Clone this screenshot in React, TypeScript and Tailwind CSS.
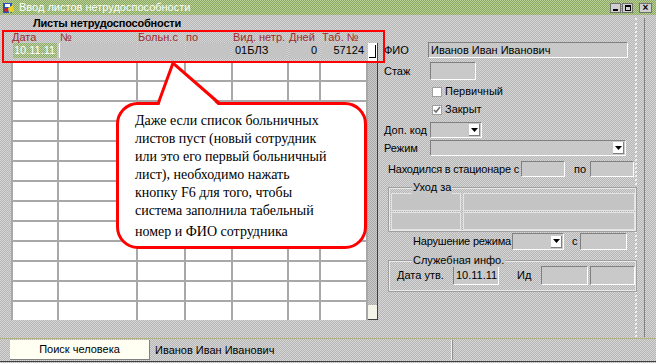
import React from "react";

const cols = "grid grid-cols-[44px_77px_46px_45px_54px_30px_45px] gap-x-[2px]";

const Field = ({ w, children, right }: { w: string; children?: React.ReactNode; right?: boolean }) => (
  <div
    className={`${w} shrink-0 h-full flex items-center px-[2px] whitespace-nowrap border border-t-[#808080] border-l-[#808080] border-b-white border-r-white bg-[#c9c9c9] ${right ? "justify-end" : ""}`}
  >
    {children}
  </div>
);

const Select = ({ w }: { w: string }) => (
  <div className={`${w} shrink-0 h-full flex justify-end items-center pr-[1px] border border-t-[#808080] border-l-[#808080] border-b-white border-r-white bg-[#c9c9c9]`}>
    <div className="w-[11px] h-[12px] bg-white flex items-center justify-center border-r border-b border-[#808080]">
      <svg width="7" height="4" viewBox="0 0 7 4">
        <path d="M0 0h7L3.5 4z" fill="#000" />
      </svg>
    </div>
  </div>
);

const Check = ({ on, label }: { on?: boolean; label: string }) => (
  <div className="h-[11px] pl-[52px] flex items-center gap-[3px]">
    <div className="w-[10px] h-[10px] bg-white border border-[#a0a0a0] flex items-center justify-center">
      {on && (
        <svg width="8" height="8" viewBox="0 0 8 8">
          <path d="M1 4l2 2 4-5" stroke="#707070" strokeWidth="1.6" fill="none" />
        </svg>
      )}
    </div>
    <span>{label}</span>
  </div>
);

const Group = ({ label, className, children }: { label: string; className: string; children: React.ReactNode }) => (
  <div className={`relative ml-[9px] w-[247px] border border-[#e8e8e8] outline outline-1 outline-[#a0a0a0] ${className}`}>
    <span className="absolute -top-[8px] left-[22px] px-[1px] bg-[#c6c6c6] leading-[13px] whitespace-nowrap">{label}</span>
    {children}
  </div>
);

export default function App() {
  const dither = "bg-[image:repeating-conic-gradient(#b6b6b6_0_25%,#d6d6d6_0_50%)] bg-[length:2px_2px]";
  return (
    <div
      className={`relative w-[656px] h-[363px] overflow-hidden flex flex-col text-[11px] leading-[13px] text-black font-['Liberation_Sans',Arial,sans-serif] ${dither}`}
    >
      {/* title bar */}
      <div className="h-[15px] flex items-center pl-[2px] pr-[4px] bg-[image:repeating-conic-gradient(#88a860_0_25%,#bcd09a_0_50%)] bg-[length:2px_2px]">
        <svg width="13" height="12" viewBox="0 0 13 12">
          <rect x="1" y="1" width="9" height="10" fill="#2850c8" />
          <rect x="3" y="2" width="5" height="3" fill="#ffffff" />
          <path d="M6 6l5-3 1 6-5 2z" fill="#f0d020" />
          <circle cx="4" cy="8" r="2" fill="#d02020" />
        </svg>
        <span className="ml-[4px] text-white">Ввод листов нетрудоспособности</span>
        <div className="ml-auto flex gap-[1px]">
          <div className="w-[11px] h-[10px] bg-[#d0d0d0] border border-[#707070] flex items-end justify-center pb-[1px]">
            <div className="w-[5px] h-[2px] bg-black" />
          </div>
          <div className="w-[11px] h-[10px] bg-[#d0d0d0] border border-[#707070] flex items-center justify-center">
            <div className="w-[6px] h-[6px] border border-black border-t-2" />
          </div>
          <div className="ml-[5px] w-[13px] h-[10px] bg-[#d0d0d0] border border-[#707070] flex items-center justify-center text-[10px] leading-none font-bold">
            ×
          </div>
        </div>
      </div>

      {/* body */}
      <div className="h-[323px] flex">
        {/* left: list */}
        <div className="w-[380px] shrink-0 flex flex-col">
          <div className="h-[15px] pt-[2px] pl-[33px] font-bold tracking-[-0.2px]">Листы нетрудоспособности</div>
          <div className={`${cols} h-[13px] pl-[13px] pt-[1px] text-[#a02828] whitespace-nowrap`}>
            <span className="-ml-[1px]">Дата</span>
            <span className="ml-[1px]">№</span>
            <span>Больн.с</span>
            <span>по</span>
            <span>Вид. нетр.</span>
            <span>Дней</span>
            <span className="ml-[1px]">Таб. №</span>
          </div>
          <div className="flex">
            <div className="w-[357px] ml-[11px] flex flex-col">
              <div className={`${cols} h-[15px] pl-[2px]`}>
                <div className="flex items-center px-[1px] text-white bg-[image:repeating-conic-gradient(#88a868_0_25%,#c4d4a8_0_50%)] bg-[length:2px_2px]">
                  10.11.11
                </div>
                <div className="bg-[#c4c4c4] border-l border-white" />
                <div className="bg-[#c4c4c4]" />
                <div className="bg-[#c4c4c4]" />
                <div className="bg-[#c4c4c4] flex items-center px-[2px]">01БЛЗ</div>
                <div className="bg-[#c4c4c4] flex items-center justify-end px-[2px]">0</div>
                <div className="bg-[#c4c4c4] flex items-center justify-end px-[2px]">57124</div>
              </div>
              <div className={`${cols} gap-y-[2px] mt-[4px] px-[2px] bg-[#a8a8a8]`}>
                {Array.from({ length: 13 * 7 }).map((_, i) => (
                  <div key={i} className="h-[18px] bg-white" />
                ))}
              </div>
            </div>
            {/* scrollbar */}
            <div className="w-[10px] h-[277px] flex flex-col justify-between bg-[image:repeating-conic-gradient(#a8a8a8_0_25%,#cccccc_0_50%)] bg-[length:2px_2px] border-r border-[#404040]">
              <div className="h-[19px] bg-white relative">
                <div className="absolute left-[1px] bottom-[4px] w-[6px] h-[1px] bg-black" />
                <div className="absolute right-[1px] top-[2px] w-[1px] h-[13px] bg-black" />
              </div>
              <div className="h-[15px] bg-[#f4f4e8] border-b border-[#404040]" />
            </div>
          </div>
        </div>

        {/* right: details */}
        <div className="w-[265px] shrink-0 border-r border-[#808080] mt-[3px] mb-[1px] whitespace-nowrap">
          <div className="w-[257px] h-full flex flex-col border-r-2 border-dotted border-[#f0f0f0]">
            <div className="mt-[24px] h-[16px] flex items-center">
              <span className="w-[48px] shrink-0 pl-[4px]">ФИО</span>
              <Field w="w-[200px]">Иванов Иван Иванович</Field>
            </div>
            <div className="mt-[4px] h-[18px] flex items-center">
              <span className="w-[50px] shrink-0 pl-[4px]">Стаж</span>
              <Field w="w-[46px]" />
            </div>
            <div className="mt-[6px]">
              <Check label="Первичный" />
            </div>
            <div className="mt-[7px]">
              <Check on label="Закрыт" />
            </div>
            <div className="mt-[7px] h-[16px] flex items-center">
              <span className="w-[50px] shrink-0 pl-[4px]">Доп. код</span>
              <Select w="w-[52px]" />
            </div>
            <div className="mt-[2px] h-[16px] flex items-center">
              <span className="w-[50px] shrink-0 pl-[4px]">Режим</span>
              <Select w="w-[196px]" />
            </div>
            <div className="mt-[5px] h-[16px] flex items-center">
              <span className="w-[141px] shrink-0 pl-[8px] tracking-[-0.2px]">Находился в стационаре с</span>
              <Field w="w-[44px]" />
              <span className="w-[25px] shrink-0 pl-[9px]">по</span>
              <Field w="w-[44px]" />
            </div>
            <Group label="Уход за" className="mt-[11px] h-[43px] pt-[4px] px-[1px]">
              <div className="grid grid-cols-[70px_172px] gap-x-[2px] gap-y-[1px]">
                <div className="h-[18px] bg-[#c4c4c4] border border-[#e4e4e4]" />
                <div className="h-[18px] bg-[#c4c4c4] border border-[#e4e4e4]" />
                <div className="h-[18px] bg-[#c4c4c4] border border-[#e4e4e4]" />
                <div className="h-[18px] bg-[#c4c4c4] border border-[#e4e4e4]" />
              </div>
            </Group>
            <div className="mt-[2px] h-[17px] flex items-center">
              <span className="w-[132px] shrink-0 pl-[33px] tracking-[-0.2px]">Нарушение режима</span>
              <Select w="w-[52px]" />
              <span className="w-[16px] shrink-0 pl-[8px]">с</span>
              <Field w="w-[47px]" />
            </div>
            <Group label="Служебная инфо." className="mt-[11px] h-[30px] pt-[4px]">
              <div className="h-[19px] flex items-center">
                <span className="w-[63px] shrink-0 pl-[7px]">Дата утв.</span>
                <Field w="w-[46px]">10.11.11</Field>
                <span className="w-[42px] shrink-0 pl-[18px]">Ид</span>
                <Field w="w-[47px]" />
                <div className="w-[2px] shrink-0" />
                <Field w="w-[45px]" />
              </div>
            </Group>
          </div>
        </div>
      </div>

      {/* status bar */}
      <div className="h-[25px] flex flex-col">
        <div className="h-[1px] bg-[#b4b47a]" />
        <div className="h-[20px] mt-[1px] flex items-stretch">
          <div className="ml-[10px] w-[140px] bg-[#fffff2] border-r border-b border-[#808080] flex items-center justify-center">
            Поиск человека
          </div>
          <div className="w-[302px] pl-[5px] flex items-center border-r border-[#f0f0f0]">Иванов Иван Иванович</div>
          <div className="flex-1 border-l border-[#909090]" />
        </div>
        <div className="h-[1px] mt-[1px] bg-[#404040]" />
      </div>

      {/* red highlight frame */}
      <div className="absolute left-[2px] top-[30px] w-[383px] h-[33px] border-2 border-[#ff0000]" />

      {/* callout */}
      <div className="absolute left-[116px] top-[102px] w-[251px] h-[147px] rounded-[22px] border-[3px] border-[#ff0000] bg-white pl-[16px] pt-[7px] text-[14px] leading-[18px] text-black font-['Liberation_Serif','Times_New_Roman',serif]">
        <div>Даже если список больничных</div>
        <div>листов пуст (новый сотрудник</div>
        <div>или это его первый больничный</div>
        <div>лист), необходимо нажать</div>
        <div>кнопку F6 для того, чтобы</div>
        <div>система заполнила табельный</div>
        <div className="mt-[3px]">номер и ФИО сотрудника</div>
      </div>
      <svg className="absolute left-[150px] top-[60px]" width="80" height="48" viewBox="0 0 80 48">
        <polygon points="9,46 23,4 69,46" fill="#ffffff" />
        <polyline points="8,44 23,3 70,44" fill="none" stroke="#ff0000" strokeWidth="3" strokeLinejoin="miter" />
      </svg>
    </div>
  );
}
